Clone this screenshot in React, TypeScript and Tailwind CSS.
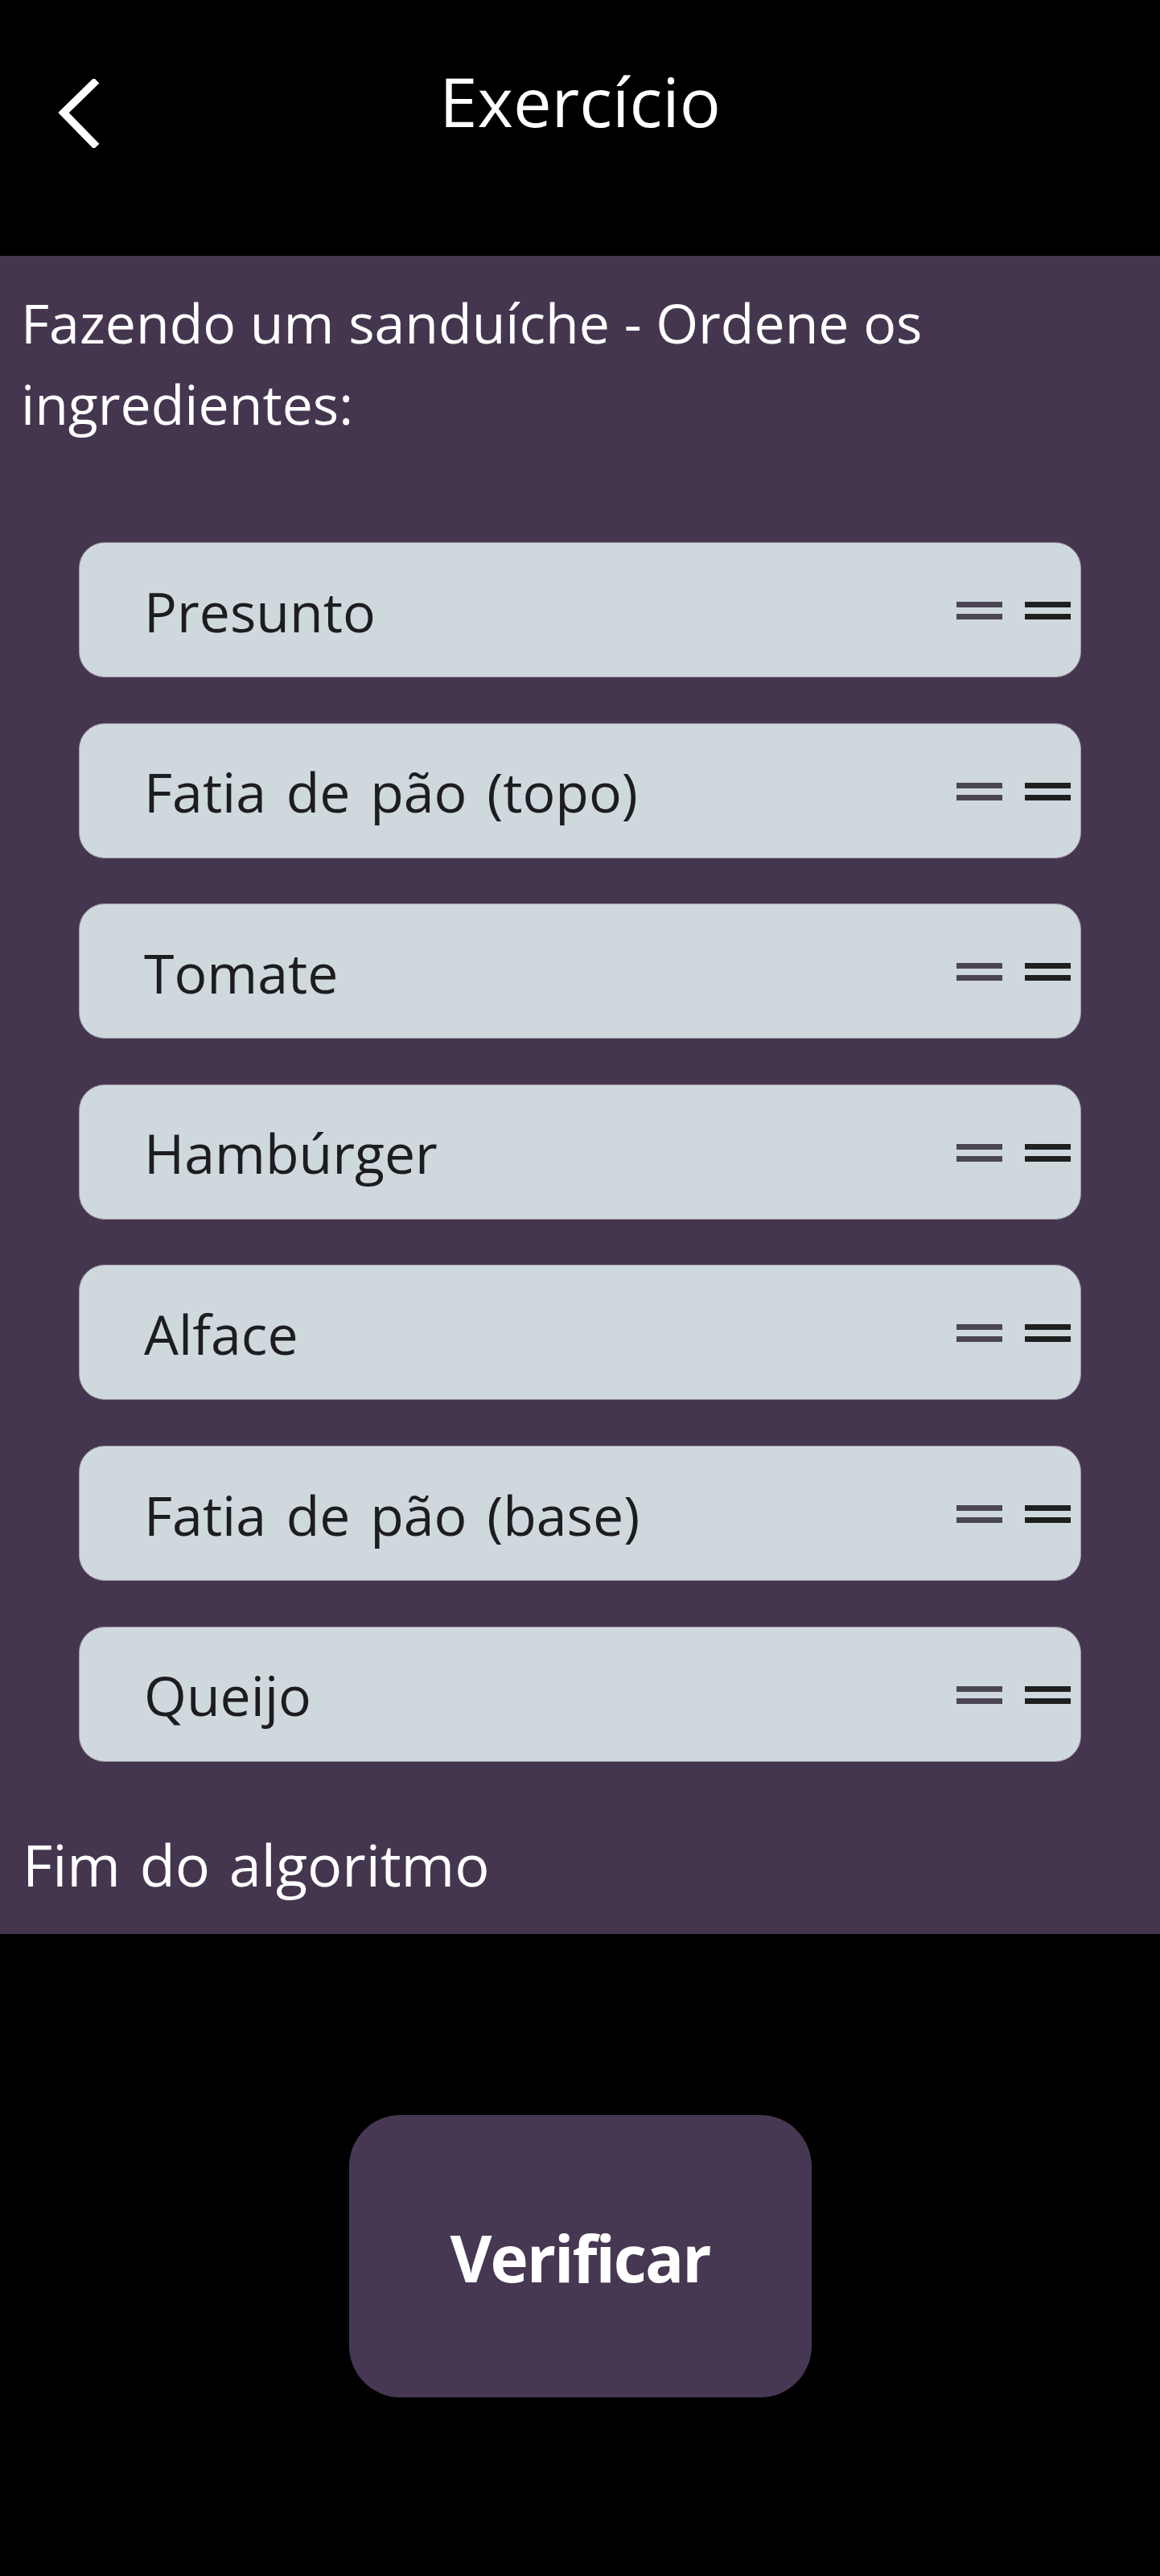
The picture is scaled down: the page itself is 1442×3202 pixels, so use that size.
import React from 'react';

const ingredients = [
  'Presunto',
  'Fatia de pão (topo)',
  'Tomate',
  'Hambúrger',
  'Alface',
  'Fatia de pão (base)',
  'Queijo',
];

function DragHandle({ color }: { color: string }) {
  return (
    <svg width="57" height="22" viewBox="0 0 57 22" className="block">
      <rect x="0" y="0" width="57" height="7" fill={color} />
      <rect x="0" y="15" width="57" height="7" fill={color} />
    </svg>
  );
}

export default function App() {
  return (
    <div className="w-[1442px] min-h-[3202px] bg-black font-['Open_Sans',sans-serif] text-white">
      {/* Top bar */}
      <header className="h-[318px] grid grid-cols-[1fr_auto_1fr] items-start">
        <button className="ml-[70px] mt-[98px] w-[56px] h-[86px] flex items-start">
          <svg width="56" height="86" viewBox="0 0 56 86">
            <path d="M50 2 L9 42 L50 84" fill="none" stroke="white" strokeWidth="9.5" strokeLinecap="butt" strokeLinejoin="miter" />
          </svg>
        </button>
        <h1 className="mt-[68px] text-[85px] leading-[1.362] font-normal text-center">Exercício</h1>
        <div />
      </header>

      {/* Exercise panel */}
      <section className="bg-[#453650] pt-[32px] pb-[38px]">
        <p className="px-[26px] text-[68px] leading-[101px]">
          Fazendo um sanduíche - Ordene os ingredientes:
        </p>

        <ul className="mt-[122px] mx-[98px] flex flex-col gap-[56.6px]">
          {ingredients.map((item) => (
            <li
              key={item}
              className="h-[168px] rounded-[32px] bg-[#cfd8dd] border border-[#9e99a6] flex items-center justify-between pl-[80px] pr-[12px]"
            >
              <span className="text-[68px] leading-[1.362] pt-[4px] [word-spacing:7px] text-[#1d1d1f]">{item}</span>
              <span className="flex items-center gap-[28px] pt-[2px]">
                <DragHandle color="#4b4554" />
                <DragHandle color="#1e201f" />
              </span>
            </li>
          ))}
        </ul>

        <p className="mt-[78px] px-[28px] text-[72px] leading-[1.362] [word-spacing:5px]">Fim do algoritmo</p>
      </section>

      {/* Action */}
      <div className="flex justify-center pt-[225px]">
        <button className="w-[575px] h-[351px] rounded-[64px] bg-[#463852] flex items-center justify-center text-[80px] font-bold tracking-[-2px] text-white pt-[4px]">
          Verificar
        </button>
      </div>
    </div>
  );
}
